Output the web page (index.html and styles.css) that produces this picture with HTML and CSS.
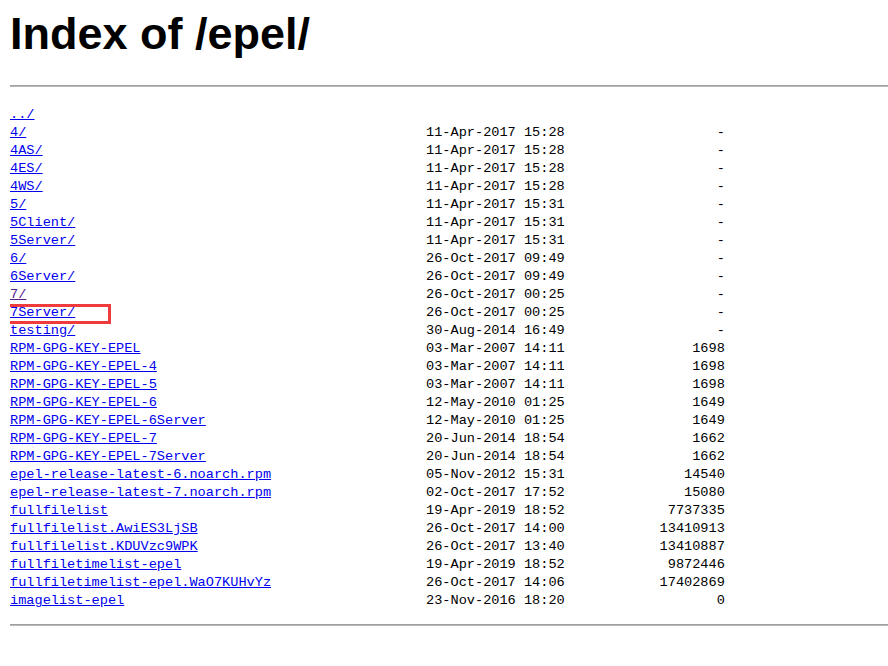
FILE: index.html
```html
<!DOCTYPE html>
<html>
<head>
<meta charset="utf-8">
<title>Index of /epel/</title>
<link rel="stylesheet" href="styles.css">
</head>
<body>
<h1 class="title">Index of /epel/</h1>
<hr class="rule rule-top">
<div class="listing">
  <a class="name parent" href="#">../</a>
  <a class="name" href="#">4/</a><span class="date">11-Apr-2017 15:28</span><span class="size">-</span>
  <a class="name" href="#">4AS/</a><span class="date">11-Apr-2017 15:28</span><span class="size">-</span>
  <a class="name" href="#">4ES/</a><span class="date">11-Apr-2017 15:28</span><span class="size">-</span>
  <a class="name" href="#">4WS/</a><span class="date">11-Apr-2017 15:28</span><span class="size">-</span>
  <a class="name" href="#">5/</a><span class="date">11-Apr-2017 15:31</span><span class="size">-</span>
  <a class="name" href="#">5Client/</a><span class="date">11-Apr-2017 15:31</span><span class="size">-</span>
  <a class="name" href="#">5Server/</a><span class="date">11-Apr-2017 15:31</span><span class="size">-</span>
  <a class="name" href="#">6/</a><span class="date">26-Oct-2017 09:49</span><span class="size">-</span>
  <a class="name" href="#">6Server/</a><span class="date">26-Oct-2017 09:49</span><span class="size">-</span>
  <a class="name visited" href="#">7/</a><span class="date">26-Oct-2017 00:25</span><span class="size">-</span>
  <a class="name" href="#">7Server/</a><span class="date">26-Oct-2017 00:25</span><span class="size">-</span>
  <a class="name" href="#">testing/</a><span class="date">30-Aug-2014 16:49</span><span class="size">-</span>
  <a class="name" href="#">RPM-GPG-KEY-EPEL</a><span class="date">03-Mar-2007 14:11</span><span class="size">1698</span>
  <a class="name" href="#">RPM-GPG-KEY-EPEL-4</a><span class="date">03-Mar-2007 14:11</span><span class="size">1698</span>
  <a class="name" href="#">RPM-GPG-KEY-EPEL-5</a><span class="date">03-Mar-2007 14:11</span><span class="size">1698</span>
  <a class="name" href="#">RPM-GPG-KEY-EPEL-6</a><span class="date">12-May-2010 01:25</span><span class="size">1649</span>
  <a class="name" href="#">RPM-GPG-KEY-EPEL-6Server</a><span class="date">12-May-2010 01:25</span><span class="size">1649</span>
  <a class="name" href="#">RPM-GPG-KEY-EPEL-7</a><span class="date">20-Jun-2014 18:54</span><span class="size">1662</span>
  <a class="name" href="#">RPM-GPG-KEY-EPEL-7Server</a><span class="date">20-Jun-2014 18:54</span><span class="size">1662</span>
  <a class="name" href="#">epel-release-latest-6.noarch.rpm</a><span class="date">05-Nov-2012 15:31</span><span class="size">14540</span>
  <a class="name" href="#">epel-release-latest-7.noarch.rpm</a><span class="date">02-Oct-2017 17:52</span><span class="size">15080</span>
  <a class="name" href="#">fullfilelist</a><span class="date">19-Apr-2019 18:52</span><span class="size">7737335</span>
  <a class="name" href="#">fullfilelist.AwiES3LjSB</a><span class="date">26-Oct-2017 14:00</span><span class="size">13410913</span>
  <a class="name" href="#">fullfilelist.KDUVzc9WPK</a><span class="date">26-Oct-2017 13:40</span><span class="size">13410887</span>
  <a class="name" href="#">fullfiletimelist-epel</a><span class="date">19-Apr-2019 18:52</span><span class="size">9872446</span>
  <a class="name" href="#">fullfiletimelist-epel.WaO7KUHvYz</a><span class="date">26-Oct-2017 14:06</span><span class="size">17402869</span>
  <a class="name" href="#">imagelist-epel</a><span class="date">23-Nov-2016 18:20</span><span class="size">0</span>
  <div class="highlight-box"></div>
</div>
<hr class="rule rule-bottom">
</body>
</html>
```
FILE: styles.css
```css
html, body {
  background: #ffffff;
}

body {
  margin: 0 0 0 10px;
  color: #000000;
  font-family: "Liberation Sans", Arial, sans-serif;
}

.title {
  margin: 8px 0 0;
  font-size: 45px;
  line-height: 52px;
  font-weight: bold;
}

.rule {
  height: 0;
  margin: 0;
  border: 0;
  border-top: 1px solid #a0a0a0;
  border-bottom: 1px solid #b8b8b8;
}

.rule-top {
  margin-top: 25px;
}

.rule-bottom {
  margin-top: 14px;
}

.listing {
  position: relative;
  margin: 19px 0 0;
  display: grid;
  grid-template-columns: 51ch 18ch calc(19ch - 3px);
  grid-auto-rows: 18px;
  font-family: "Liberation Mono", "Courier New", monospace;
  font-size: 13.6px;
  line-height: 18px;
  white-space: pre;
}

.listing a {
  color: #0000ee;
  text-decoration: underline;
  justify-self: start;
}

.listing a.visited {
  color: #551a8b;
}

.parent {
  grid-column: 1 / -1;
}

.size {
  text-align: right;
}

.highlight-box {
  position: absolute;
  left: -7px;
  top: 198px;
  width: 102px;
  height: 14px;
  border: 3px solid #ef3b3b;
  pointer-events: none;
}
```
